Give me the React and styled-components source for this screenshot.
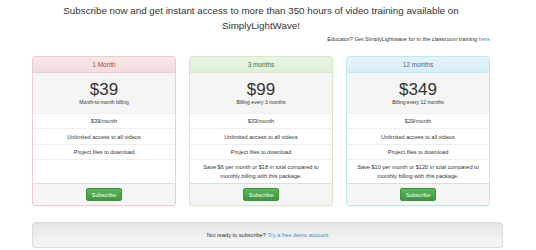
import React from "react";
import styled, { createGlobalStyle } from "styled-components";

const GlobalStyle = createGlobalStyle`
  body {
    margin: 0;
    background: #fff;
    font-family: "Liberation Sans", Arial, sans-serif;
    color: #333;
  }
`;

const THEMES = {
  danger: { bg: "#f2dede", top: "#f7e6e6", border: "#ebccd1", text: "#a94442" },
  success: { bg: "#dff0d8", top: "#e8f5e3", border: "#d6e9c6", text: "#3c763d" },
  info: { bg: "#d9edf7", top: "#e5f3fa", border: "#bce8f1", text: "#31708f" },
};

const plans = [
  {
    kind: "danger",
    title: "1 Month",
    price: "$39",
    note: "Month-to-month billing",
    monthly: "$39/month",
    save: "",
  },
  {
    kind: "success",
    title: "3 months",
    price: "$99",
    note: "Billing every 3 months",
    monthly: "$33/month",
    save: "Save $6 per month or $18 in total compared to monthly billing with this package.",
  },
  {
    kind: "info",
    title: "12 months",
    price: "$349",
    note: "Billing every 12 months",
    monthly: "$29/month",
    save: "Save $10 per month or $120 in total compared to monthly billing with this package.",
  },
];

const App = () => (
  <>
    <GlobalStyle />
    <Page>
      <Headline>
        Subscribe now and get instant access to more than 350 hours of video
        training available on SimplyLightWave!
      </Headline>
      <Educator>
        Educator? Get SimplyLightwave for in the classroom training{" "}
        <Link href="#">here</Link>
      </Educator>
      <Cards>
        {plans.map((p) => (
          <Card key={p.title} $kind={p.kind}>
            <CardHeader $kind={p.kind}>{p.title}</CardHeader>
            <PriceBox>
              <Price>{p.price}</Price>
              <PriceNote>{p.note}</PriceNote>
            </PriceBox>
            <Row $h={15}>{p.monthly}</Row>
            <Row $h={16}>Unlimited access to all videos</Row>
            <Row $h={15}>Project files to download</Row>
            <SaveRow>{p.save}</SaveRow>
            <CardFooter>
              <Button>Subscribe</Button>
            </CardFooter>
          </Card>
        ))}
      </Cards>
      <Well>
        Not ready to subscribe? <Link href="#">Try a free demo account</Link>
      </Well>
    </Page>
  </>
);

const Page = styled.div`
  width: 536px;
  padding-top: 3px;
`;

const Headline = styled.h1`
  width: 420px;
  margin: 0 0 0 51px;
  font-size: 9.8px;
  font-weight: normal;
  line-height: 15px;
  text-align: center;
  color: #333;
`;

const Educator = styled.p`
  width: 458px;
  margin: 2px 0 0 32px;
  font-size: 5.6px;
  line-height: 8px;
  text-align: right;
  color: #333;
`;

const Link = styled.a`
  color: #428bca;
  text-decoration: none;
`;

const Cards = styled.div`
  display: grid;
  grid-template-columns: repeat(3, 144px);
  gap: 13px;
  margin: 13px 0 0 32px;
`;

const Card = styled.div`
  display: flex;
  flex-direction: column;
  border: 1px solid ${(p) => THEMES[p.$kind].border};
  border-radius: 3px;
  background: #fff;
  box-shadow: 0 1px 2px rgba(0, 0, 0, 0.05);
  overflow: hidden;
`;

const CardHeader = styled.div`
  height: 15px;
  display: flex;
  align-items: center;
  justify-content: center;
  font-size: 6.5px;
  color: ${(p) => THEMES[p.$kind].text};
  background: linear-gradient(${(p) => THEMES[p.$kind].top}, ${(p) => THEMES[p.$kind].bg});
  border-bottom: 1px solid ${(p) => THEMES[p.$kind].border};
`;

const PriceBox = styled.div`
  height: 40px;
  display: flex;
  flex-direction: column;
  align-items: center;
  justify-content: center;
  background: #f5f5f5;
`;

const Price = styled.div`
  font-size: 17px;
  line-height: 18px;
  color: #333;
`;

const PriceNote = styled.div`
  font-size: 5px;
  line-height: 7px;
  color: #333;
`;

const Row = styled.div`
  height: ${(p) => p.$h}px;
  box-sizing: border-box;
  display: flex;
  align-items: center;
  justify-content: center;
  border-top: 1px solid #eee;
  font-size: 5.6px;
  color: #333;
`;

const SaveRow = styled.div`
  flex: 1;
  min-height: 24px;
  box-sizing: border-box;
  display: flex;
  align-items: center;
  justify-content: center;
  padding: 0 8px;
  border-top: 1px solid #eee;
  font-size: 5.6px;
  line-height: 9px;
  text-align: center;
  color: #333;
`;

const CardFooter = styled.div`
  height: 22px;
  box-sizing: border-box;
  display: flex;
  align-items: center;
  justify-content: center;
  background: #f5f5f5;
  border-top: 1px solid #ddd;
`;

const Button = styled.button`
  width: 36px;
  height: 13px;
  padding: 0;
  border: 1px solid #3e8f3e;
  border-radius: 2px;
  background: linear-gradient(#5cb85c, #419641);
  color: #fff;
  font-family: inherit;
  font-size: 5.5px;
  cursor: pointer;
`;

const Well = styled.div`
  width: 471px;
  height: 26px;
  box-sizing: border-box;
  margin: 16px 0 0 32px;
  display: flex;
  align-items: center;
  justify-content: center;
  gap: 2px;
  background: linear-gradient(#e8e8e8, #f5f5f5);
  border: 1px solid #dcdcdc;
  border-radius: 3px;
  box-shadow: inset 0 1px 3px rgba(0, 0, 0, 0.05);
  font-size: 5.6px;
  color: #333;
`;

export default App;
